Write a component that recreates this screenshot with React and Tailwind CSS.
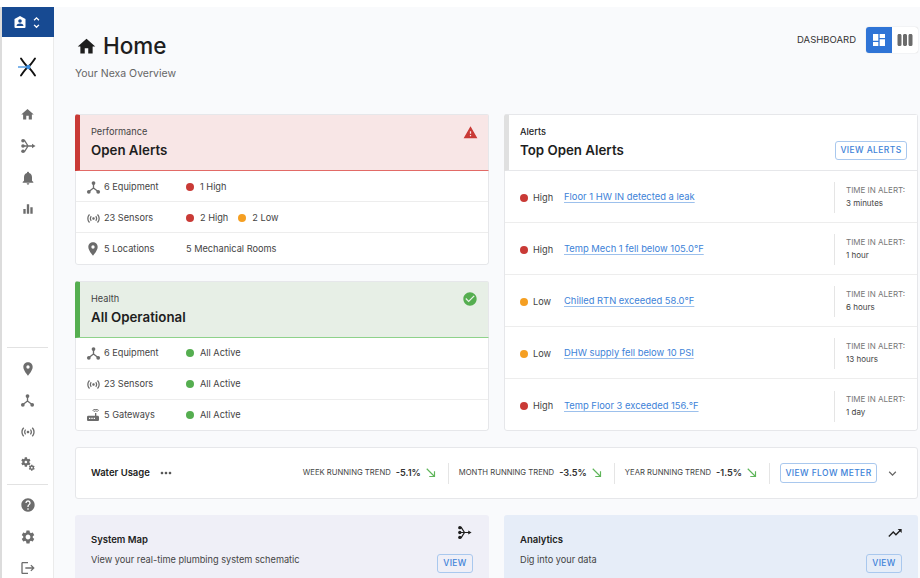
import React from 'react';
import {
  MdHome, MdNotifications, MdEqualizer, MdLocationOn, MdSensors, MdRouter, MdMiscellaneousServices,
  MdHelp, MdSettings, MdLogout, MdWarning, MdCheckCircle, MdDashboard, MdViewWeek, MdMoreHoriz,
  MdExpandMore, MdSouthEast, MdTrendingUp, MdUnfoldMore,
} from 'react-icons/md';

const HubIcon = ({ size = 16, className = '' }) => (
  <svg width={size} height={size} viewBox="0 0 16 16" className={className} fill="currentColor" stroke="currentColor">
    <path d="M8 4v4.5M8 8.5l-4.5 3.5M8 8.5l4.5 3.5" strokeWidth="1.4" fill="none" />
    <circle cx="8" cy="3.2" r="2" stroke="none" />
    <circle cx="3" cy="12.6" r="2" stroke="none" />
    <circle cx="13" cy="12.6" r="2" stroke="none" />
  </svg>
);

const MapIcon = ({ size = 16, className = '' }) => (
  <svg width={size} height={size} viewBox="0 0 16 16" className={className} fill="currentColor" stroke="currentColor">
    <path d="M3 2.5h1.5L8 8l-3.5 5.5H3M3 8h10" strokeWidth="1.3" fill="none" />
    <circle cx="3" cy="2.8" r="1.8" stroke="none" />
    <circle cx="3" cy="8" r="1.8" stroke="none" />
    <circle cx="3" cy="13.2" r="1.8" stroke="none" />
    <path d="M12 5.8 15.5 8 12 10.2z" stroke="none" />
  </svg>
);

const OrgIcon = () => (
  <svg width="14" height="14" viewBox="0 0 14 14">
    <path d="M1.500 4 7 1l5.500 3v8a1 1 0 0 1-1 1h-9a1 1 0 0 1-1-1z" fill="#fff" />
    <circle cx="7" cy="6" r="1.800" fill="#174a92" />
    <path d="M3.500 11c.3-1.700 1.700-2.400 3.500-2.400s3.200.7 3.500 2.400z" fill="#174a92" />
  </svg>
);

const Logo = () => (
  <svg width="22" height="22" viewBox="0 0 22 22">
    <path d="M4 2.500C7 7 9 9.500 11 11s4 4 7 8.500M18 2.500C15 7 13 9.500 11 11s-4 4-7 8.500" stroke="#111" strokeWidth="1.900" strokeLinecap="round" fill="none" />
    <path d="M1 11h10" stroke="#3b8ee0" strokeWidth="1.300" />
    <circle cx="11.300" cy="11" r="2.200" fill="#3b8ee0" />
  </svg>
);

const SideIcon = ({ icon: Icon, size = 16 }) => (
  <div className="h-[31.5px] flex items-center justify-center text-[#6d6d6d]">
    <Icon size={size} />
  </div>
);

const Dot = ({ color }) => <span className={`w-[8px] h-[8px] rounded-full shrink-0 ${color}`} />;

const StatRow = ({ icon: Icon, iconSize = 16, label, children, height = 'h-[31px]', last }) => (
  <div className={`${height} flex items-center pl-[9px] text-[9.2px] text-[#444] ${last ? '' : 'border-b border-[#ededed]'}`}>
    <div className="w-[16px] flex justify-center text-[#6b6b6b]"><Icon size={iconSize} /></div>
    <span className="ml-[3px] w-[82px]">{label}</span>
    <div className="flex items-center">{children}</div>
  </div>
);

const StatusCard = ({ tone, eyebrow, title, icon, rows }) => (
  <div className="rounded-[3px] overflow-hidden">
    <div className={`h-[57px] border-l-[5px] border-t border-r border-t-[#e6e7ea] border-r-[#e6e7ea] border-b px-[11px] pr-[10px] flex justify-between ${tone}`}>
      <div>
        <div className="mt-[10px] text-[9.2px] leading-[14px] text-[#444]">{eyebrow}</div>
        <div className="mt-[2px] text-[13.3px] leading-[18px] font-semibold text-[#1e1e1e]">{title}</div>
      </div>
      <div className="mt-[9px] w-[16px] h-[16px] flex items-center justify-center">{icon}</div>
    </div>
    <div className="bg-white border-x border-b border-[#e6e7ea] rounded-b-[3px]">{rows}</div>
  </div>
);

const alerts = [
  { level: 'High', color: 'bg-[#c93a36]', text: 'Floor 1 HW IN detected a leak', time: '3 minutes' },
  { level: 'High', color: 'bg-[#c93a36]', text: 'Temp Mech 1 fell below 105.0°F', time: '1 hour' },
  { level: 'Low', color: 'bg-[#f59f22]', text: 'Chilled RTN exceeded 58.0°F', time: '6 hours' },
  { level: 'Low', color: 'bg-[#f59f22]', text: 'DHW supply fell below 10 PSI', time: '13 hours' },
  { level: 'High', color: 'bg-[#c93a36]', text: 'Temp Floor 3 exceeded 156.°F', time: '1 day' },
];

const Trend = ({ label, value }) => (
  <div className="flex items-center h-[21px] border-r border-[#e5e5e5] pr-[10px] mr-[10px]">
    <span className="text-[7.7px] text-[#444]">{label}</span>
    <span className="ml-[5px] text-[9.2px] font-semibold text-[#333]">{value}</span>
    <MdSouthEast size={14} className="ml-[3px] text-[#5fb55a]" />
  </div>
);

const OutlineButton = ({ children, className = '' }) => (
  <button className={`border border-[#a9c8ee] rounded-[3px] text-[8.5px] font-medium tracking-[0.4px] text-[#3d82d8] ${className}`}>
    {children}
  </button>
);

const LinkCard = ({ bg, title, text, icon }) => (
  <div className={`flex-1 h-[70px] rounded-[3px] pl-[16px] pr-[16px] flex justify-between ${bg}`}>
    <div>
      <div className="mt-[18px] text-[9.5px] leading-[13px] font-semibold text-[#222]">{title}</div>
      <div className="mt-[7px] text-[9.2px] leading-[13px] text-[#444]">{text}</div>
    </div>
    <div className="flex flex-col items-end">
      <div className="mt-[10px] h-[16px] text-[#1e1e1e]">{icon}</div>
      <OutlineButton className="mt-[13px] w-[36px] h-[19px]">VIEW</OutlineButton>
    </div>
  </div>
);

export default function App() {
  return (
    <div className="w-[920px] h-[578px] overflow-hidden bg-white flex font-['Inter',sans-serif] pt-[7px]">
      <div className="w-[2px] h-full bg-[#dcdcdc] shrink-0" />
      <aside className="w-[52px] shrink-0 bg-white border-r border-[#ebebeb] flex flex-col">
        <div className="h-[30px] -mr-[1px] bg-[#174a92] flex items-center pl-[11px] gap-[2px] text-white">
          <OrgIcon />
          <MdUnfoldMore size={15} />
        </div>
        <div className="h-[60px] flex items-center justify-center"><Logo /></div>
        <nav className="mt-[2px]">
          <SideIcon icon={MdHome} size={15} />
          <SideIcon icon={MapIcon} />
          <SideIcon icon={MdNotifications} />
          <SideIcon icon={MdEqualizer} size={14} />
        </nav>
        <div className="mt-auto mx-[5px] border-t border-[#e2e2e2] pt-[6px]">
          <SideIcon icon={MdLocationOn} />
          <SideIcon icon={HubIcon} size={15} />
          <SideIcon icon={MdSensors} />
          <SideIcon icon={MdMiscellaneousServices} />
        </div>
        <div className="mx-[5px] mt-[4px] border-t border-[#e2e2e2] pt-[5px] -mb-[6px]">
          <SideIcon icon={MdHelp} />
          <SideIcon icon={MdSettings} />
          <SideIcon icon={MdLogout} />
        </div>
      </aside>

      <main className="flex-1 min-w-0 bg-[#f9fafc] pl-[21px] pr-[2px]">
        <header className="h-[107px] flex justify-between">
          <div>
            <div className="mt-[24px] flex items-center text-[#1e1e1e]">
              <MdHome size={21} className="ml-[1px]" />
              <h1 className="ml-[6px] text-[22.5px] leading-[30px] font-medium">Home</h1>
            </div>
            <p className="mt-[6px] text-[10.5px] leading-[14px] text-[#666]">Your Nexa Overview</p>
          </div>
          <div className="mt-[20px] flex items-center h-[26px]">
            <span className="text-[9.5px] text-[#333]">DASHBOARD</span>
            <div className="ml-[10px] flex rounded-[3px] overflow-hidden bg-white shadow-[0_0_1px_#bbb]">
              <div className="w-[26px] h-[26px] bg-[#2f74d6] flex items-center justify-center text-white"><MdDashboard size={16} /></div>
              <div className="w-[26px] h-[26px] flex items-center justify-center text-[#6b6b6b]"><MdViewWeek size={18} /></div>
            </div>
          </div>
        </header>

        <div className="flex gap-[15px]">
          <div className="w-[414px] flex flex-col gap-[16px]">
            <StatusCard
              tone="bg-[#f8e6e6] border-l-[#c93a36] border-b-[#e26a66]"
              eyebrow="Performance"
              title="Open Alerts"
              icon={<MdWarning size={15} className="text-[#c93a36]" />}
              rows={<>
                <StatRow icon={HubIcon} iconSize={15} height="h-[31px] pt-[2px]" label="6 Equipment"><Dot color="bg-[#c93a36]" /><span className="ml-[6px]">1 High</span></StatRow>
                <StatRow icon={MdSensors} iconSize={15} height="h-[31px] pt-[2px]" label="23 Sensors">
                  <Dot color="bg-[#c93a36]" /><span className="ml-[6px]">2 High</span>
                  <span className="ml-[10px] flex items-center"><Dot color="bg-[#f59f22]" /><span className="ml-[6px]">2 Low</span></span>
                </StatRow>
                <StatRow icon={MdLocationOn} iconSize={16} label="5 Locations" height="h-[31px] pt-[1px]" last>5 Mechanical Rooms</StatRow>
              </>}
            />
            <StatusCard
              tone="bg-[#e7efe6] border-l-[#55ae50] border-b-[#8ed28a]"
              eyebrow="Health"
              title="All Operational"
              icon={<MdCheckCircle size={16} className="text-[#55ae50]" />}
              rows={<>
                <StatRow icon={HubIcon} iconSize={15} label="6 Equipment"><Dot color="bg-[#55ae50]" /><span className="ml-[6px]">All Active</span></StatRow>
                <StatRow icon={MdSensors} iconSize={15} label="23 Sensors"><Dot color="bg-[#55ae50]" /><span className="ml-[6px]">All Active</span></StatRow>
                <StatRow icon={MdRouter} iconSize={16} label="5 Gateways" height="h-[30px]" last><Dot color="bg-[#55ae50]" /><span className="ml-[6px]">All Active</span></StatRow>
              </>}
            />
          </div>

          <div className="w-[414px] rounded-[3px] overflow-hidden">
            <div className="h-[57px] bg-white border-l-[5px] border-l-[#e0e0e0] border-t border-r border-t-[#e6e7ea] border-r-[#e6e7ea] border-b border-b-[#e6e7ea] pl-[11px] pr-[10px] flex justify-between">
              <div>
                <div className="mt-[10px] text-[9.2px] leading-[14px] font-medium text-[#222]">Alerts</div>
                <div className="mt-[2px] text-[13.3px] leading-[18px] font-semibold text-[#1e1e1e]">Top Open Alerts</div>
              </div>
              <OutlineButton className="mt-[26px] w-[72px] h-[19px]">VIEW ALERTS</OutlineButton>
            </div>
            <div className="bg-white border-x border-b border-[#e6e7ea] rounded-b-[3px]">
              {alerts.map((a, i) => (
                <div key={a.text} className={`flex items-center pl-[15px] ${i < 4 ? 'h-[52px] pt-[2px] border-b border-[#ededed]' : 'h-[51px] pt-[3px]'}`}>
                  <Dot color={a.color} />
                  <span className="ml-[5px] w-[30px] text-[9.2px] text-[#444]">{a.level}</span>
                  <a className="ml-[1px] text-[9.4px] text-[#3d82d8] underline underline-offset-2 decoration-[#9cc0ec]">{a.text}</a>
                  <div className="ml-auto w-[83px] h-[31px] border-l border-[#e5e5e5] pl-[11px] shrink-0 overflow-hidden whitespace-nowrap">
                    <div className="text-[8px] leading-[13px] text-[#777] mt-[2px]">TIME IN ALERT:</div>
                    <div className="text-[8px] leading-[13px] text-[#444]">{a.time}</div>
                  </div>
                </div>
              ))}
            </div>
          </div>
        </div>

        <div className="mt-[16px] w-[843px] h-[52px] bg-white rounded-[3px] border border-[#e6e7ea] pl-[15px] pr-[17px] flex items-center">
          <span className="text-[9.5px] font-semibold text-[#222]">Water Usage</span>
          <MdMoreHoriz size={16} className="ml-[8px] text-[#555]" />
          <div className="ml-auto flex items-center">
            <Trend label="WEEK RUNNING TREND" value="-5.1%" />
            <Trend label="MONTH RUNNING TREND" value="-3.5%" />
            <Trend label="YEAR RUNNING TREND" value="-1.5%" />
            <OutlineButton className="w-[97px] h-[20px]">VIEW FLOW METER</OutlineButton>
            <MdExpandMore size={15} className="ml-[8px] text-[#666]" />
          </div>
        </div>

        <div className="mt-[16px] w-[843px] flex gap-[15px]">
          <LinkCard bg="bg-[#efeff7]" title="System Map" text="View your real-time plumbing system schematic" icon={<MapIcon size={15} className="mr-[1px]" />} />
          <LinkCard bg="bg-[#e6edf8]" title="Analytics" text="Dig into your data" icon={<MdTrendingUp size={16} className="-mr-[1px]" />} />
        </div>
      </main>
    </div>
  );
}
